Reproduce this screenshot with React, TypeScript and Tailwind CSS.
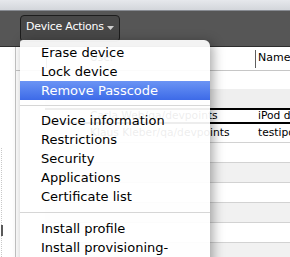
const FONT = { fontFamily: '"DejaVu Sans", "Liberation Sans", sans-serif' };

type Item = { label: string; active?: boolean } | { sep: number };

const MENU: Item[] = [
  { label: "Erase device" },
  { label: "Lock device" },
  { label: "Remove Passcode", active: true },
  { sep: 5 },
  { label: "Device information" },
  { label: "Restrictions" },
  { label: "Security" },
  { label: "Applications" },
  { label: "Certificate list" },
  { sep: 6 },
  { label: "Install profile" },
  { label: "Install provisioning-" },
];

function ActionsMenu() {
  return (
    <div className="absolute left-[20px] top-[40px] w-[190px] h-[230px] pt-[3px] bg-white/[0.93] rounded-tl-[3px] rounded-tr-[6px] shadow-[3px_2px_12px_rgba(0,0,0,0.35)] text-[13px] text-black">
      {MENU.map((it, i) =>
        "sep" in it ? (
          <div key={i} className={it.sep === 5 ? "pt-[5px] pb-[5px]" : "pt-[6px] pb-[6px]"}>
            <div className="h-px bg-[#d6d6d6]" />
          </div>
        ) : (
          <div
            key={i}
            className={
              it.active
                ? "h-[19px] leading-[19px] pl-[21px] whitespace-nowrap text-white bg-gradient-to-b from-[#6b94f4] to-[#3d6ae8]"
                : "h-[19px] leading-[19px] pl-[21px] whitespace-nowrap"
            }
          >
            {it.label}
          </div>
        )
      )}
    </div>
  );
}

function Row({ user, name, className }: { user?: string; name?: string; className: string }) {
  return (
    <div className={"flex items-center leading-none " + className}>
      <div className="w-[210px] shrink-0 pl-[45px] whitespace-nowrap overflow-hidden">{user}</div>
      <div className="pl-[3px] whitespace-nowrap">{name}</div>
    </div>
  );
}

export default function App() {
  return (
    <div className="relative w-[290px] h-[257px] overflow-hidden bg-white" style={FONT}>
      <div className="h-[11px] bg-gradient-to-b from-[#e6e8ec] to-[#d3d6db] border-b border-[#878b92]" />
      <div className="h-[36px] bg-[#565656] border-b border-[#2e2e2e] pl-[20px] pt-[4px]">
        <div className="h-[27px] w-[100px] flex items-center pb-[2px] pl-[5px] rounded-[4px] border border-[#1d1d1d] bg-[#484848] text-white text-[11px] tracking-[-0.25px] whitespace-nowrap">
          Device Actions
          <svg width="7" height="4" viewBox="0 0 7 4" className="ml-[3px] mt-[1px]">
            <polygon points="0,0 7,0 3.5,4" fill="#cfcfcf" />
          </svg>
        </div>
      </div>

      <div className="flex h-[210px]">
        <div className="w-[16px] shrink-0 border-r border-[#c4c4c4] flex flex-col">
          <div className="h-[101px]" />
          <div className="flex-1 ml-[1px] border-l border-dotted border-[#c8c8c8]">
            <div className="mt-[77px] -ml-[1px] w-[2px] h-[11px] bg-[#5a5a5a]" />
          </div>
        </div>

        <div className="flex-1 min-w-0 text-[10.7px] text-black">
          <div className="h-[24px] flex items-center border-b border-[#c6c6c6]">
            <div className="w-[30px] shrink-0" />
            <div className="w-px h-[18px] shrink-0 bg-[#5e5e5e]" />
            <div className="w-[208px] shrink-0 pl-[43px]">User</div>
            <div className="w-px h-[18px] shrink-0 bg-[#5e5e5e]" />
            <div className="pl-[2px] text-[11px] whitespace-nowrap">Name</div>
          </div>
          <div className="ml-[29px]">
            <Row className="h-[18px]" />
            <Row className="h-[19px] bg-[#efefef]" />
            <Row className="h-[16px] border-y-2 border-black" user="Carla Web/qa/devpoints" name="iPod de Carla" />
            <Row className="h-[19px] border-b border-[#d2d2d2]" user="Klaus Kleber/qa/devpoints" name="testipod" />
            <Row className="h-[20px] border-b border-[#d2d2d2]" />
            <Row className="h-[20px] border-b border-[#d2d2d2] bg-[#f1f1f1]" />
            <Row className="h-[20px] border-b border-[#d2d2d2]" />
            <Row className="h-[20px] border-b border-[#d2d2d2] bg-[#f1f1f1]" />
            <Row className="h-[20px] border-b border-[#d2d2d2]" />
            <Row className="h-[20px] border-b border-[#d2d2d2] bg-[#f1f1f1]" />
          </div>
        </div>
      </div>

      <ActionsMenu />
    </div>
  );
}
